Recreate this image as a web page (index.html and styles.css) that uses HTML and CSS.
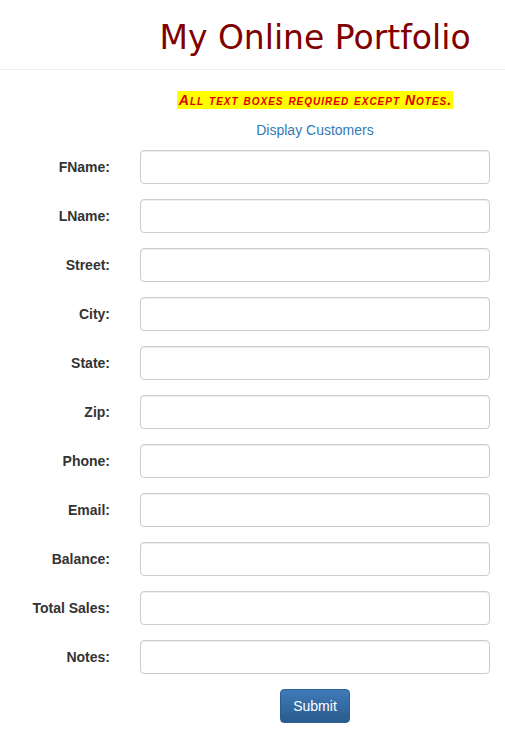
FILE: index.html
```html
<!DOCTYPE html>
<html>
<head>
<meta charset="utf-8">
<link rel="stylesheet" href="styles.css">
</head>
<body>
<header class="header">
  <div class="grid">
    <div></div>
    <h1 class="title">My Online Portfolio</h1>
  </div>
</header>
<main class="grid main">
  <div></div>
  <div class="intro">
    <p class="notice"><span class="mark">All text boxes required except Notes.</span></p>
    <a class="link" href="#">Display Customers</a>
  </div>
  <label class="lbl">FName:</label><input class="field" type="text">
  <label class="lbl">LName:</label><input class="field" type="text">
  <label class="lbl">Street:</label><input class="field" type="text">
  <label class="lbl">City:</label><input class="field" type="text">
  <label class="lbl">State:</label><input class="field" type="text">
  <label class="lbl">Zip:</label><input class="field" type="text">
  <label class="lbl">Phone:</label><input class="field" type="text">
  <label class="lbl">Email:</label><input class="field" type="text">
  <label class="lbl">Balance:</label><input class="field" type="text">
  <label class="lbl">Total Sales:</label><input class="field" type="text">
  <label class="lbl">Notes:</label><input class="field" type="text">
  <div></div>
  <div class="actions"><button class="btn" type="button">Submit</button></div>
</main>
</body>
</html>
```
FILE: styles.css
```css
html, body {
  margin: 0;
  padding: 0;
  background: #fff;
}
body {
  font-family: "Liberation Sans", Arial, sans-serif;
  font-size: 14px;
  color: #333;
}
.grid {
  display: grid;
  grid-template-columns: 110px 350px;
  column-gap: 30px;
}
.header {
  border-bottom: 1px solid #eee;
  height: 69px;
}
.title {
  margin: 0;
  padding-top: 18px;
  text-align: center;
  font-family: "DejaVu Sans", sans-serif;
  font-weight: normal;
  font-size: 33px;
  line-height: 40px;
  color: #800000;
}
.main {
  row-gap: 15px;
  align-items: center;
}
.intro {
  text-align: center;
  padding-top: 21px;
  margin-bottom: -5px;
}
.notice {
  margin: 0 0 11px;
  line-height: 18px;
}
.mark {
  background: #ffff00;
  color: #e00000;
  font-weight: bold;
  font-style: italic;
  font-variant: small-caps;
  font-size: 14px;
  letter-spacing: 1px;
  padding: 1px 1px 1px 2px;
}
.link {
  color: #337ab7;
  text-decoration: none;
  line-height: 20px;
}
.lbl {
  text-align: right;
  font-weight: bold;
}
.field {
  box-sizing: border-box;
  height: 34px;
  width: 350px;
  border: 1px solid #ccc;
  border-radius: 4px;
  box-shadow: inset 0 1px 1px rgba(0,0,0,.075);
  margin: 0;
}
.actions {
  text-align: center;
}
.btn {
  width: 70px;
  height: 34px;
  border: 1px solid #2b5f93;
  border-radius: 4px;
  background: linear-gradient(to bottom, #3f7ab8 0%, #2a5c8e 100%);
  color: #fff;
  font-family: "Liberation Sans", Arial, sans-serif;
  font-size: 14px;
  padding: 0;
}
```
